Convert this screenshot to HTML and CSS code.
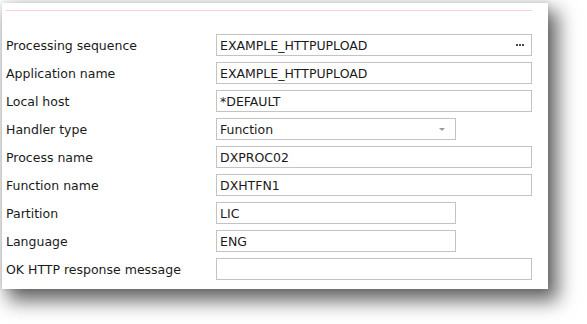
FILE: index.html
```html
<!DOCTYPE html>
<html lang="en">
  <head>
    <meta charset="UTF-8" />
    <title>HTTP handler</title>
    <link rel="stylesheet" href="styles.css">
  </head>
  <body>
    <div class="panel">
      <div class="rule"></div>
      <form class="fields">
        <label>Processing sequence</label>
        <div class="field wide">
          <span>EXAMPLE_HTTPUPLOAD</span>
          <span class="more"><i></i><i></i><i></i></span>
        </div>

        <label>Application name</label>
        <div class="field wide"><span>EXAMPLE_HTTPUPLOAD</span></div>

        <label>Local host</label>
        <div class="field wide"><span>*DEFAULT</span></div>

        <label>Handler type</label>
        <div class="field short">
          <span>Function</span>
          <span class="arrow"></span>
        </div>

        <label>Process name</label>
        <div class="field wide"><span>DXPROC02</span></div>

        <label>Function name</label>
        <div class="field wide"><span>DXHTFN1</span></div>

        <label>Partition</label>
        <div class="field short"><span>LIC</span></div>

        <label>Language</label>
        <div class="field short"><span>ENG</span></div>

        <label>OK HTTP response message</label>
        <div class="field wide"><span></span></div>
      </form>
    </div>
  </body>
</html>
```

FILE: styles.css
```css
body {
  margin: 0;
  padding-bottom: 40px;
  background-color: #ffffff;
  font-family: "DejaVu Sans", Verdana, sans-serif;
  font-size: 12.5px;
  color: #1a1a1a;
}

.panel {
  width: 526px;
  margin: 3px 0 0 2px;
  padding: 7px 16px 9px 4px;
  background-color: #ffffff;
  box-shadow: 0 0 6px rgba(0, 0, 0, 0.14), 8px 10px 18px 2px rgba(0, 0, 0, 0.6);
}

.rule {
  height: 1px;
  background-color: #ffcdd4;
}

.fields {
  display: grid;
  grid-template-columns: 210px 1fr;
  row-gap: 6px;
  margin-top: 23px;
}

.fields label {
  display: flex;
  align-items: center;
  height: 22px;
  white-space: nowrap;
}

.field {
  box-sizing: border-box;
  display: flex;
  align-items: center;
  justify-content: space-between;
  height: 22px;
  padding: 0 6px 0 3px;
  border: 1px solid #c3c3c3;
}

.wide {
  width: 316px;
}

.short {
  width: 240px;
}

.more {
  display: flex;
  gap: 1px;
  margin-right: 1px;
}

.more i {
  width: 2px;
  height: 2px;
  background-color: #4a4a55;
}

.arrow {
  width: 0;
  height: 0;
  margin-right: 4px;
  border-left: 3px solid transparent;
  border-right: 3px solid transparent;
  border-top: 3px solid #999999;
}
```
